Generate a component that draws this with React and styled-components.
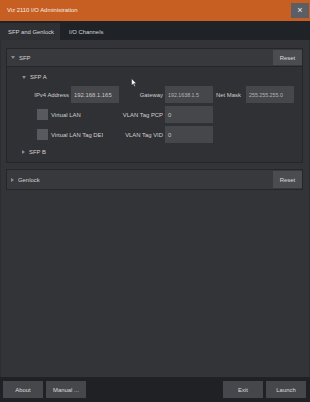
import React from "react";
import styled, { createGlobalStyle } from "styled-components";

const GlobalStyle = createGlobalStyle`
  html, body {
    margin: 0;
    padding: 0;
    background: #333438;
  }
  * {
    box-sizing: border-box;
  }
  body {
    font-family: "Liberation Sans", Arial, sans-serif;
    font-size: 5.9px;
    color: #d0d0d0;
  }
`;

function App() {
  return (
    <>
      <GlobalStyle />
      <Window>
        <TitleBar>
          <Title>Viz 2110 I/O Administration</Title>
          <CloseButton>×</CloseButton>
        </TitleBar>

        <TabBar>
          <Tab active>SFP and Genlock</Tab>
          <Tab>I/O Channels</Tab>
        </TabBar>

        <Content>
          <Panel>
            <PanelHeader>
              <Caret open />
              <PanelTitle>SFP</PanelTitle>
              <ResetButton>Reset</ResetButton>
            </PanelHeader>
            <PanelBody>
              <SubHeader>
                <Caret open />
                <span>SFP A</span>
              </SubHeader>
              <FieldGrid>
                <Label>IPv4 Address</Label>
                <Input>192.168.1.165</Input>
                <Label>Gateway</Label>
                <Input dim>192.1638.1.5</Input>
                <Label left>Net Mask</Label>
                <Input dim>255.255.255.0</Input>

                <CheckRow>
                  <CheckBox />
                  <span>Virtual LAN</span>
                </CheckRow>
                <Label>VLAN Tag PCP</Label>
                <Input>0</Input>
                <Spacer />

                <CheckRow>
                  <CheckBox />
                  <span>Virtual LAN Tag DEI</span>
                </CheckRow>
                <Label>VLAN Tag VID</Label>
                <Input>0</Input>
                <Spacer />
              </FieldGrid>
              <SubHeader spaced>
                <Caret />
                <span>SFP B</span>
              </SubHeader>
            </PanelBody>
          </Panel>

          <Panel gap>
            <PanelHeader tall>
              <Caret />
              <PanelTitle>Genlock</PanelTitle>
              <ResetButton>Reset</ResetButton>
            </PanelHeader>
          </Panel>

          <Cursor viewBox="0 0 6 9">
            <path d="M0.5 0.5 L0.5 7.5 L2.2 5.9 L3.4 8.5 L4.4 8 L3.3 5.5 L5.5 5.5 Z" fill="#f2f2f2" stroke="#222" strokeWidth="0.5" />
          </Cursor>
        </Content>

        <Footer>
          <FooterGroup>
            <FooterButton>About</FooterButton>
            <FooterButton>Manual ...</FooterButton>
          </FooterGroup>
          <FooterGroup>
            <FooterButton>Exit</FooterButton>
            <FooterButton>Launch</FooterButton>
          </FooterGroup>
        </Footer>
      </Window>
    </>
  );
}

export default App;

const Window = styled.div`
  width: 310px;
  height: 402px;
  display: flex;
  flex-direction: column;
  background: #333438;
  overflow: hidden;
`;

const TitleBar = styled.div`
  height: 21px;
  background: #c75f22;
  display: flex;
  align-items: center;
  justify-content: space-between;
  padding: 0 1px 0 7px;
`;

const Title = styled.span`
  color: #f4ebe4;
  margin-top: -2px;
`;

const CloseButton = styled.div`
  width: 18px;
  height: 15px;
  margin-top: -1px;
  background: #5b5e64;
  color: #f0f0f0;
  font-size: 9px;
  line-height: 15px;
  text-align: center;
`;

const TabBar = styled.div`
  height: 19px;
  background: #1f2226;
  display: flex;
  align-items: flex-end;
`;

const Tab = styled.div`
  height: 17px;
  display: flex;
  align-items: center;
  white-space: nowrap;
  flex-shrink: 0;
  width: ${(p) => (p.active ? "60px" : "auto")};
  padding: 0 8px 0 ${(p) => (p.active ? "8px" : "9px")};
  background: ${(p) => (p.active ? "#2e3034" : "transparent")};
  color: #d6d6d6;
`;

const Content = styled.div`
  position: relative;
  flex: 1;
  padding: 8px 6px 0 5px;
  background: #333438;
  border-left: 1px solid #2c2d31;
  border-right: 1px solid #2c2d31;
`;

const Panel = styled.div`
  margin-top: ${(p) => (p.gap ? "6px" : "0")};
  border: 1px solid #25262a;
  background: #303135;
`;

const PanelHeader = styled.div`
  height: ${(p) => (p.tall ? "19px" : "18px")};
  display: flex;
  align-items: center;
  padding: 1px 0 1px 4px;
  background: #38393d;
  border-bottom: ${(p) => (p.tall ? "none" : "1px solid #25262a")};
`;

const PanelTitle = styled.span`
  flex: 1;
  margin-left: 4px;
  color: #d4d4d4;
`;

const ResetButton = styled.div`
  width: 29px;
  height: 100%;
  display: flex;
  align-items: center;
  justify-content: center;
  background: #4b4c50;
  color: #dedede;
`;

const Caret = styled.span`
  width: 0;
  height: 0;
  border-style: solid;
  border-color: transparent;
  ${(p) =>
    p.open
      ? `border-width: 3px 2.5px 0 2.5px; border-top-color: #8c8c8c;`
      : `border-width: 2.5px 0 2.5px 3px; border-left-color: #8c8c8c;`}
`;

const PanelBody = styled.div`
  padding: 4px 0 4px 0;
`;

const SubHeader = styled.div`
  height: 12px;
  display: flex;
  align-items: center;
  gap: 4px;
  padding-left: 15px;
  margin-top: ${(p) => (p.spaced ? "3px" : "0")};
  color: #d0d0d0;
`;

const FieldGrid = styled.div`
  margin: 3px 0 0 27px;
  display: grid;
  grid-template-columns: 35px 48px 42px 48px 29px 48px;
  grid-auto-rows: 17px;
  column-gap: 2px;
  row-gap: 3px;
  align-items: center;
`;

const Label = styled.span`
  text-align: ${(p) => (p.left ? "left" : "right")};
  padding-left: ${(p) => (p.left ? "1px" : "0")};
  white-space: nowrap;
  color: #cfcfcf;
`;

const Input = styled.div`
  height: 17px;
  display: flex;
  align-items: center;
  padding-left: 3px;
  background: #46474b;
  color: ${(p) => (p.dim ? "#b4b4b4" : "#c8c8c8")};
  font-size: ${(p) => (p.dim ? "5.3px" : "5.9px")};
  white-space: nowrap;
`;

const CheckRow = styled.div`
  grid-column: span 2;
  display: flex;
  align-items: center;
  gap: 3px;
  padding-left: 3px;
  color: #cfcfcf;
`;

const CheckBox = styled.span`
  width: 11px;
  height: 11px;
  background: #58595e;
`;

const Spacer = styled.span`
  grid-column: span 2;
`;

const Cursor = styled.svg`
  position: absolute;
  left: 130px;
  top: 38px;
  width: 6px;
  height: 9px;
`;

const Footer = styled.div`
  height: 25px;
  background: #1f2125;
  display: flex;
  align-items: center;
  justify-content: space-between;
  padding: 0 4px 0 3px;
`;

const FooterGroup = styled.div`
  display: flex;
  gap: 3px;
`;

const FooterButton = styled.div`
  width: 40px;
  height: 17px;
  display: flex;
  align-items: center;
  justify-content: center;
  background: #45474b;
  color: #dcdcdc;
`;
